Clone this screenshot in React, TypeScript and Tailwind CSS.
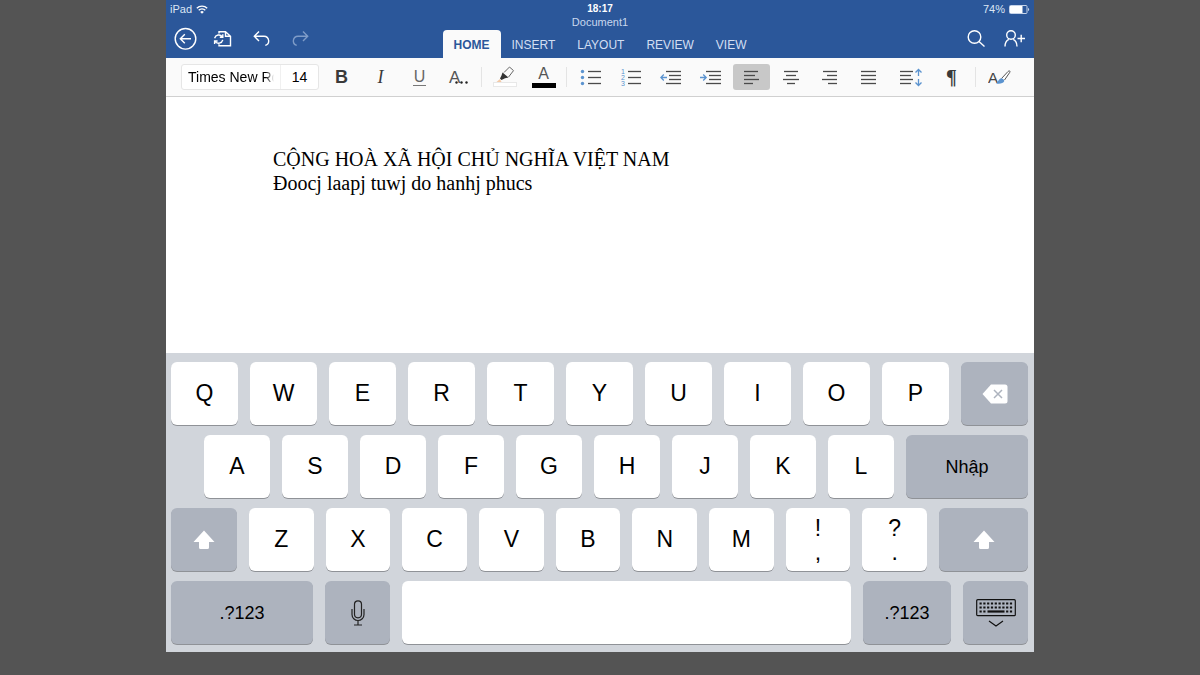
import { useState } from 'react';
import type { ReactNode } from 'react';

const tabs = ['HOME', 'INSERT', 'LAYOUT', 'REVIEW', 'VIEW'];
const topRow = ['Q', 'W', 'E', 'R', 'T', 'Y', 'U', 'I', 'O', 'P'];
const middleRow = ['A', 'S', 'D', 'F', 'G', 'H', 'J', 'K', 'L'];
const bottomRow = ['Z', 'X', 'C', 'V', 'B', 'N', 'M'];

// each line is [x1, x2, y]
const alignments = [
  { label: 'Align left', lines: [[3, 17, 5], [3, 14, 9], [3, 18, 13], [3, 12, 17]] },
  { label: 'Align center', lines: [[4, 18, 5], [6, 16, 9], [3, 19, 13], [7, 15, 17]] },
  { label: 'Align right', lines: [[4, 18, 5], [8, 18, 9], [3, 18, 13], [9, 18, 17]] },
  { label: 'Justify', lines: [[3, 18, 5], [3, 18, 9], [3, 18, 13], [3, 18, 17]] },
];

function Lines({ rows }: { rows: number[][] }) {
  return (
    <>
      {rows.map(([x1, x2, y]) => (
        <path key={y} d={`M${x1} ${y}.5H${x2}`} stroke="#4a4a4a" strokeWidth="1.3" />
      ))}
    </>
  );
}

function Tool({ label, width, active, onClick, children }: { label: string; width: string; active?: boolean; onClick?: () => void; children: ReactNode }) {
  return (
    <button
      type="button"
      aria-label={label}
      aria-pressed={active}
      onClick={onClick}
      className={`flex h-[26px] shrink-0 items-center justify-center rounded-[3px] leading-none text-[#3a3a3a] ${width} ${active ? 'bg-[#c8c8c8]' : ''}`}
    >
      {children}
    </button>
  );
}

function Divider() {
  return <div className="mx-[3px] h-5 w-px shrink-0 bg-[#e4e4e4]" />;
}

function Key({ label, dark, size = 'flex-1', children }: { label: string; dark?: boolean; size?: string; children?: ReactNode }) {
  return (
    <button
      type="button"
      aria-label={label}
      className={`flex h-[63px] min-w-0 flex-col items-center justify-center rounded-md shadow-[0_1px_0_#8f9297] ${size} ${
        dark ? 'bg-[#adb3be] text-lg' : 'bg-white text-[23px]'
      }`}
    >
      {children ?? label}
    </button>
  );
}

function ShiftIcon() {
  return (
    <svg width="22" height="20" viewBox="0 0 22 20" fill="#fff">
      <path d="M11 .5 21.5 12H16v5.500a1.500 1.500 0 0 1-1.500 1.500h-7A1.500 1.500 0 0 1 6 17.500V12H.5Z" />
    </svg>
  );
}

export default function App() {
  const [tab, setTab] = useState('HOME');
  const [font, setFont] = useState('Times New Roman');
  const [size, setSize] = useState('14');
  const [align, setAlign] = useState('Align left');

  return (
    <div className="min-h-screen bg-[#545454] font-['Liberation_Sans',Arial,sans-serif] text-black">
      <div className="mx-auto w-full max-w-[868px] bg-white">
        {/* Blue header: status bar, file actions and ribbon tabs */}
        <header className="grid grid-cols-[1fr_auto_1fr] bg-[#2b579a] text-white">
          <div className="flex flex-col">
            <div className="flex h-[18px] items-center gap-1 pl-1 text-[11px] text-[#dce6f5]">
              <span>iPad</span>
              <svg width="12" height="9" viewBox="0 0 12 9" fill="none" stroke="#fff" strokeWidth="1.4">
                <path d="M.8 3.300a7.300 7.300 0 0 1 10.400 0M2.700 5.300a4.700 4.700 0 0 1 6.600 0" />
                <path d="M6 8.700 4.200 6.900a2.600 2.600 0 0 1 3.600 0Z" fill="#fff" stroke="none" />
              </svg>
            </div>
            <div className="flex h-10 items-center gap-4 pl-2">
              <button type="button" aria-label="Back">
                <svg width="23" height="23" viewBox="0 0 23 23" fill="none" stroke="#fff" strokeWidth="1.4">
                  <circle cx="11.5" cy="11.8" r="10.3" />
                  <path d="M17 11.800H6.200M10.800 7.300l-4.500 4.500 4.500 4.500" />
                </svg>
              </button>
              <button type="button" aria-label="File">
                <svg width="22" height="22" viewBox="0 0 22 22" fill="none" stroke="#fff" strokeWidth="1.4">
                  <path d="M6 6.500V4.700h6.500l5 4.500v9.500H6v-1.500M12.500 4.700v4.500h5" />
                  <path d="M1.600 11.200a4.400 4.400 0 0 1 7.800-1.400M9.800 7.200v3h-3M9.800 12.800A4.400 4.400 0 0 1 2 14.400M1.600 17v-3h3" />
                </svg>
              </button>
              <button type="button" aria-label="Undo">
                <svg width="22" height="22" viewBox="0 0 22 22" fill="none" stroke="#fff" strokeWidth="1.4">
                  <path d="M8 4.500 3.300 9.200 8 13.900M3.300 9.200h9.700a4.700 4.700 0 0 1 1.300 9.200" />
                </svg>
              </button>
              <button type="button" aria-label="Redo">
                <svg width="22" height="22" viewBox="0 0 22 22" fill="none" stroke="#7f9cc8" strokeWidth="1.4">
                  <path d="m14 4.500 4.700 4.700L14 13.900M18.700 9.200H9a4.700 4.700 0 0 0-1.300 9.200" />
                </svg>
              </button>
            </div>
          </div>

          <div className="flex flex-col items-center">
            <div className="pt-0.5 text-[10px] leading-[14px] font-bold">18:17</div>
            <div className="pb-0.5 text-[11px] leading-3 text-[#c9d8ee]">Document1</div>
            <nav className="flex">
              {tabs.map((name) => (
                <button
                  key={name}
                  type="button"
                  onClick={() => setTab(name)}
                  className={`h-7 rounded-t-sm px-[11px] pt-0.5 text-xs ${
                    tab === name ? 'bg-[#fafafa] font-bold text-[#2b579a]' : 'text-[#d3dff2]'
                  }`}
                >
                  {name}
                </button>
              ))}
            </nav>
          </div>

          <div className="flex flex-col items-end">
            <div className="flex h-[18px] items-center gap-1 pr-1 text-[11px] text-[#dce6f5]">
              <span>74%</span>
              <svg width="21" height="9" viewBox="0 0 21 9" fill="none">
                <rect x=".5" y=".5" width="17.5" height="8" rx="1" stroke="#c5d3e9" />
                <rect x="1" y="1" width="12.5" height="7" fill="#fff" />
                <path d="M19 3c1.600.5 1.600 2.500 0 3Z" fill="#c5d3e9" />
              </svg>
            </div>
            <div className="flex h-10 items-center gap-4 pr-[9px]">
              <button type="button" aria-label="Search">
                <svg width="22" height="22" viewBox="0 0 22 22" fill="none" stroke="#fff" strokeWidth="1.4">
                  <circle cx="9.5" cy="10" r="6.3" />
                  <path d="m14 14.500 5.500 5" />
                </svg>
              </button>
              <button type="button" aria-label="Share">
                <svg width="22" height="22" viewBox="0 0 22 22" fill="none" stroke="#fff" strokeWidth="1.4">
                  <circle cx="8" cy="8" r="4.3" />
                  <path d="M2 19.500c0-4.500 1.800-6.200 3.800-7.200M14 19.500c0-4.500-1.800-6.200-3.800-7.200M14.500 11.500H22M18.200 7.800v7.400" />
                </svg>
              </button>
            </div>
          </div>
        </header>

        {/* Formatting toolbar */}
        <div className="flex h-[39px] items-center border-b border-[#d0d0d0] bg-[#fafafa] pl-[15px]">
          <div className="mr-[3px] flex h-[26px] w-[138px] shrink-0 items-center rounded-[3px] border border-[#e6e6e6] bg-white text-sm">
            <div className="flex h-full w-[99px] items-center border-r border-[#f0f0f0] px-1.5">
              <input
                aria-label="Font"
                value={font}
                onChange={(e) => setFont(e.target.value)}
                className="w-full [mask-image:linear-gradient(to_right,black_90%,transparent)] outline-none"
              />
            </div>
            <input
              aria-label="Font size"
              value={size}
              onChange={(e) => setSize(e.target.value)}
              className="w-[37px] text-center outline-none"
            />
          </div>

          <Tool label="Bold" width="w-[39px]"><span className="text-lg font-bold">B</span></Tool>
          <Tool label="Italic" width="w-[39px]"><span className="font-['Liberation_Serif',serif] text-lg italic">I</span></Tool>
          <Tool label="Underline" width="w-[39px]">
            <span className="border-b border-[#777] px-px text-base leading-4 text-[#666]">U</span>
          </Tool>
          <Tool label="More formatting" width="w-[39px]">
            <svg width="22" height="22" viewBox="0 0 22 22">
              <text x="1" y="17" fontSize="17" fill="#555">A</text>
              <g fill="#222">
                <circle cx="8.5" cy="16.5" r="1.2" />
                <circle cx="13.5" cy="16.5" r="1.2" />
                <circle cx="18.5" cy="16.5" r="1.2" />
              </g>
            </svg>
          </Tool>
          <Divider />
          <Tool label="Highlight" width="w-[39px]">
            <svg width="26" height="24" viewBox="0 0 26 24" fill="none">
              <rect x="1.5" y="17.5" width="23" height="4" fill="#fff" stroke="#e8e8e8" />
              <path d="m12 7.500 5.500-5.500 4 3.600-5 6.500" stroke="#666" />
              <path d="m10.500 7.500 6 5-3.500.8-3.500 1.700-1.500-1.500 1.500-3Z" fill="#333" />
              <path d="m8 14-3.500 3h5Z" fill="#f3c9a5" />
            </svg>
          </Tool>
          <Tool label="Font color" width="w-[39px]">
            <span className="w-6 border-b-[5px] border-black pb-px text-base leading-4 text-[#555]">A</span>
          </Tool>
          <Divider />

          <Tool label="Bullets" width="w-[41px]">
            <svg width="22" height="22" viewBox="0 0 22 22">
              <g fill="#5b93cf">
                <circle cx="2.5" cy="5.5" r="1.7" />
                <circle cx="2.5" cy="11.5" r="1.7" />
                <circle cx="2.5" cy="17.5" r="1.7" />
              </g>
              <Lines rows={[[8, 21, 5], [8, 21, 11], [8, 21, 17]]} />
            </svg>
          </Tool>
          <Tool label="Numbering" width="w-[39px]">
            <svg width="22" height="22" viewBox="0 0 22 22">
              <g fill="#5b93cf" fontSize="7">
                <text x="1" y="8">1</text>
                <text x="1" y="14">2</text>
                <text x="1" y="20">3</text>
              </g>
              <Lines rows={[[8, 21, 5], [8, 21, 11], [8, 21, 17]]} />
            </svg>
          </Tool>
          <Tool label="Decrease indent" width="w-[41px]">
            <svg width="22" height="22" viewBox="0 0 22 22" fill="none">
              <path d="M7 11.500H.8M3.800 8.500l-3 3 3 3" stroke="#5b93cf" strokeWidth="1.3" />
              <Lines rows={[[6, 21, 5], [9, 21, 9], [9, 21, 13], [6, 21, 17]]} />
            </svg>
          </Tool>
          <Tool label="Increase indent" width="w-[39px]">
            <svg width="22" height="22" viewBox="0 0 22 22" fill="none">
              <path d="M0 11.500h6.200M3.200 8.500l3 3-3 3" stroke="#5b93cf" strokeWidth="1.3" />
              <Lines rows={[[6, 21, 5], [9, 21, 9], [9, 21, 13], [6, 21, 17]]} />
            </svg>
          </Tool>

          <div className="mx-[3px] flex shrink-0 gap-0.5">
            {alignments.map(({ label, lines }) => (
              <Tool key={label} label={label} width="w-[37px]" active={align === label} onClick={() => setAlign(label)}>
                <svg width="22" height="22" viewBox="0 0 22 22">
                  <Lines rows={lines} />
                </svg>
              </Tool>
            ))}
          </div>
          <Tool label="Line spacing" width="w-[41px]">
            <svg width="24" height="22" viewBox="0 0 24 22" fill="none">
              <Lines rows={[[1, 14, 5], [1, 12, 9], [1, 14, 13], [1, 12, 17]]} />
              <path d="M19.500 10V4M16.500 6.500l3-3 3 3M19.500 13v6M16.500 16.500l3 3 3-3" stroke="#5b93cf" strokeWidth="1.3" />
            </svg>
          </Tool>
          <Tool label="Show paragraph marks" width="w-[41px]">
            <span className="font-['Liberation_Serif',serif] text-xl font-bold">¶</span>
          </Tool>
          <Divider />
          <Tool label="Styles" width="w-[41px]">
            <svg width="24" height="22" viewBox="0 0 24 22" fill="none">
              <text x="0" y="17" fontSize="15" fill="#444">A</text>
              <path d="M13.500 12.500 20 5.500c1.200-1 2.600-.6 1.800.8L16.500 14" fill="#fff" stroke="#555" />
              <path d="M13 12.200c1.800 0 3.300 1.500 3.300 2.800-.8 2.500-4.800 3.300-8.300 2.500 2-.8 2-4.300 5-5.300Z" fill="#5b93cf" />
            </svg>
          </Tool>
        </div>

        <main className="min-h-64 px-[107px] pt-[50px] font-['Liberation_Serif','Times_New_Roman',serif] text-xl leading-6">
          <p>CỘNG HOÀ XÃ HỘI CHỦ NGHĨA VIỆT NAM</p>
          <p>Đoocj laapj tuwj do hanhj phucs</p>
        </main>

        {/* On-screen keyboard */}
        <section aria-label="Keyboard" className="flex flex-col gap-[10px] bg-[#d1d5db] pt-[9px] pr-1.5 pb-2 pl-[5px]">
          <div className="flex gap-3">
            {topRow.map((letter) => <Key key={letter} label={letter} />)}
            <Key label="Delete" dark>
              <svg width="26" height="20" viewBox="0 0 26 20">
                <path d="M9 .5h14A2.500 2.500 0 0 1 25.500 3v14a2.500 2.500 0 0 1-2.500 2.500H9L.5 10Z" fill="#fff" />
                <path d="m12 6 8 8m0-8-8 8" stroke="#adb3be" strokeWidth="1.5" />
              </svg>
            </Key>
          </div>
          <div className="flex gap-3 pl-[33px]">
            {middleRow.map((letter) => <Key key={letter} label={letter} />)}
            <Key label="Nhập" dark size="w-[122px]" />
          </div>
          <div className="flex gap-3">
            <Key label="Shift" dark size="w-[66px]"><ShiftIcon /></Key>
            {bottomRow.map((letter) => <Key key={letter} label={letter} />)}
            <Key label="Comma"><span className="leading-6">!</span><span className="leading-6">,</span></Key>
            <Key label="Period"><span className="leading-6">?</span><span className="leading-6">.</span></Key>
            <Key label="Right shift" dark size="w-[89px]"><ShiftIcon /></Key>
          </div>
          <div className="flex gap-3">
            <Key label=".?123" dark size="w-[142px]" />
            <Key label="Dictate" dark size="w-[65px]">
              <svg width="14" height="26" viewBox="0 0 14 26" fill="none" stroke="#222">
                <rect x="3.5" y=".8" width="7" height="17" rx="3.5" strokeWidth="1.2" />
                <path d="M1 9v5.500a6 6 0 0 0 12 0V9M7 20.500V25M3 25h8" strokeWidth="1.2" />
              </svg>
            </Key>
            <Key label="Space"><span /></Key>
            <Key label=".?123" dark size="w-[88px]" />
            <Key label="Hide keyboard" dark size="w-[65px]">
              <svg width="40" height="28" viewBox="0 0 40 28" fill="none" stroke="#111">
                <rect x=".7" y=".7" width="38.6" height="16" rx="1" strokeWidth="1.2" />
                <path d="M3.500 4.500h33M3.500 8.500h33M3.500 12.500h7M30.100 12.500h7" strokeWidth="2.2" strokeDasharray="2.2 1.6" />
                <path d="M11.500 12.500h17" strokeWidth="2.2" />
                <path d="m13 22 7 5 7-5" strokeWidth="1.2" />
              </svg>
            </Key>
          </div>
        </section>
      </div>
    </div>
  );
}
